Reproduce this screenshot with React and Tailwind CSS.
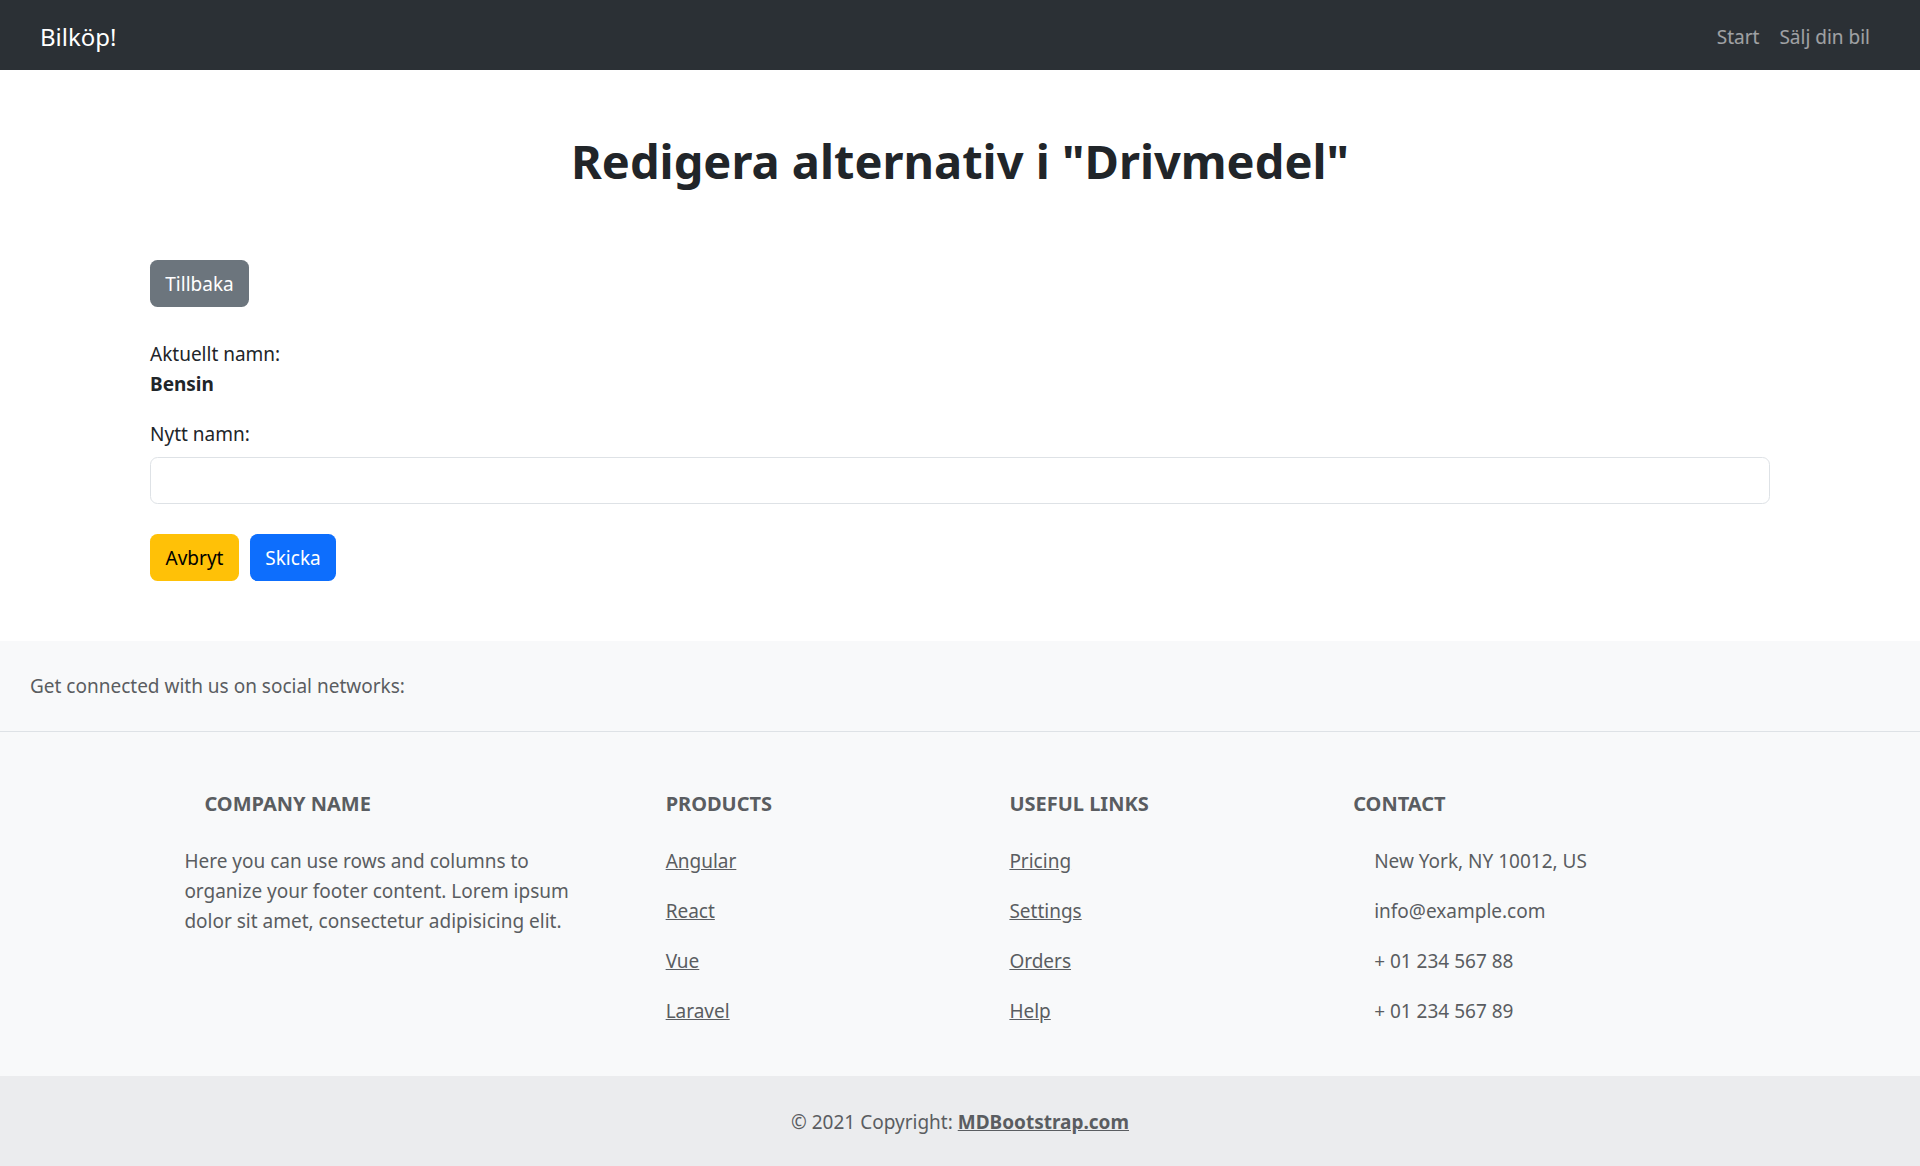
const Navbar = () => {
  return (
    <nav className="h-[70px] bg-[#2b3035] flex items-center justify-between pl-[40px] pr-[40px]">
      <a href="#" className="text-[24px] leading-[37px] pt-[2px] text-white">Bilköp!</a>
      <ul className="flex pt-[3px]">
        <li><a href="#" className="block px-[10px] text-[19px] leading-[30px] text-white/55">Start</a></li>
        <li><a href="#" className="block px-[10px] text-[19px] leading-[30px] text-white/55">Sälj din bil</a></li>
      </ul>
    </nav>
  )
}

const EditForm = () => {
  return (
    <main className="w-[1650px] mx-auto px-[15px] pb-[60px]">
      <h1 className="text-center text-[47px] font-bold leading-[60px] pt-[61px] mb-[69px]">
        Redigera alternativ i "Drivmedel"
      </h1>
      <button className="h-[47px] w-[99px] rounded-[7.5px] bg-[#6c757d] text-white text-[19px]">Tillbaka</button>
      <p className="mt-[32px]">Aktuellt namn:</p>
      <p className="font-bold">Bensin</p>
      <label htmlFor="name" className="block mt-[20px]">Nytt namn:</label>
      <input id="name" type="text" className="block mt-[8px] h-[47px] w-full border border-[#dee2e6] rounded-[7.5px] px-[15px] focus:outline-none" />
      <div className="flex gap-[11px] mt-[30px]">
        <button className="h-[47px] w-[89px] rounded-[7.5px] bg-[#ffc107] text-black text-[19px]">Avbryt</button>
        <button className="h-[47px] w-[86px] rounded-[7.5px] bg-[#0d6efd] text-white text-[19px]">Skicka</button>
      </div>
    </main>
  )
}

const FooterLink = ({ children }) => (
  <p className="mb-[20px]"><a href="#" className="underline">{children}</a></p>
)

const Footer = () => {
  return (
    <footer className="bg-[#f8f9fa] text-[#5a5d61]">
      <section className="h-[91px] border-b border-[#dee2e6] px-[30px] flex items-center">
        <span>Get connected with us on social networks:</span>
      </section>
      <section className="pt-[60px]">
        <div className="w-[1650px] mx-auto flex">
          <div className="w-[412.5px] mx-auto px-[15px] mb-[30px]">
            <h6 className="uppercase font-bold text-[20px] leading-[24px] mb-[30px] pl-[20px]">Company name</h6>
            <p className="whitespace-nowrap">
              Here you can use rows and columns to<br />
              organize your footer content. Lorem ipsum<br />
              dolor sit amet, consectetur adipisicing elit.
            </p>
          </div>
          <div className="w-[275px] mx-auto px-[15px] mb-[30px]">
            <h6 className="uppercase font-bold text-[20px] leading-[24px] mb-[30px]">Products</h6>
            <FooterLink>Angular</FooterLink>
            <FooterLink>React</FooterLink>
            <FooterLink>Vue</FooterLink>
            <FooterLink>Laravel</FooterLink>
          </div>
          <div className="w-[275px] mx-auto px-[15px] mb-[30px]">
            <h6 className="uppercase font-bold text-[20px] leading-[24px] mb-[30px]">Useful links</h6>
            <FooterLink>Pricing</FooterLink>
            <FooterLink>Settings</FooterLink>
            <FooterLink>Orders</FooterLink>
            <FooterLink>Help</FooterLink>
          </div>
          <div className="w-[412.5px] mx-auto px-[15px] mb-[30px]">
            <h6 className="uppercase font-bold text-[20px] leading-[24px] mb-[30px]">Contact</h6>
            <p className="mb-[20px] pl-[21px]">New York, NY 10012, US</p>
            <p className="mb-[20px] pl-[21px]">info@example.com</p>
            <p className="mb-[20px] pl-[21px]">+ 01 234 567 88</p>
            <p className="mb-[20px] pl-[21px]">+ 01 234 567 89</p>
          </div>
        </div>
      </section>
      <div className="h-[91px] bg-[#ebecee] flex items-center justify-center">
        <span>© 2021 Copyright:&nbsp;</span>
        <a href="#" className="font-bold underline">MDBootstrap.com</a>
      </div>
    </footer>
  )
}

export default function App() {
  return (
    <div className="min-h-screen bg-white font-['Noto_Sans',sans-serif] text-[19px] leading-[30px] text-[#212529]">
      <Navbar />
      <EditForm />
      <Footer />
    </div>
  )
}
